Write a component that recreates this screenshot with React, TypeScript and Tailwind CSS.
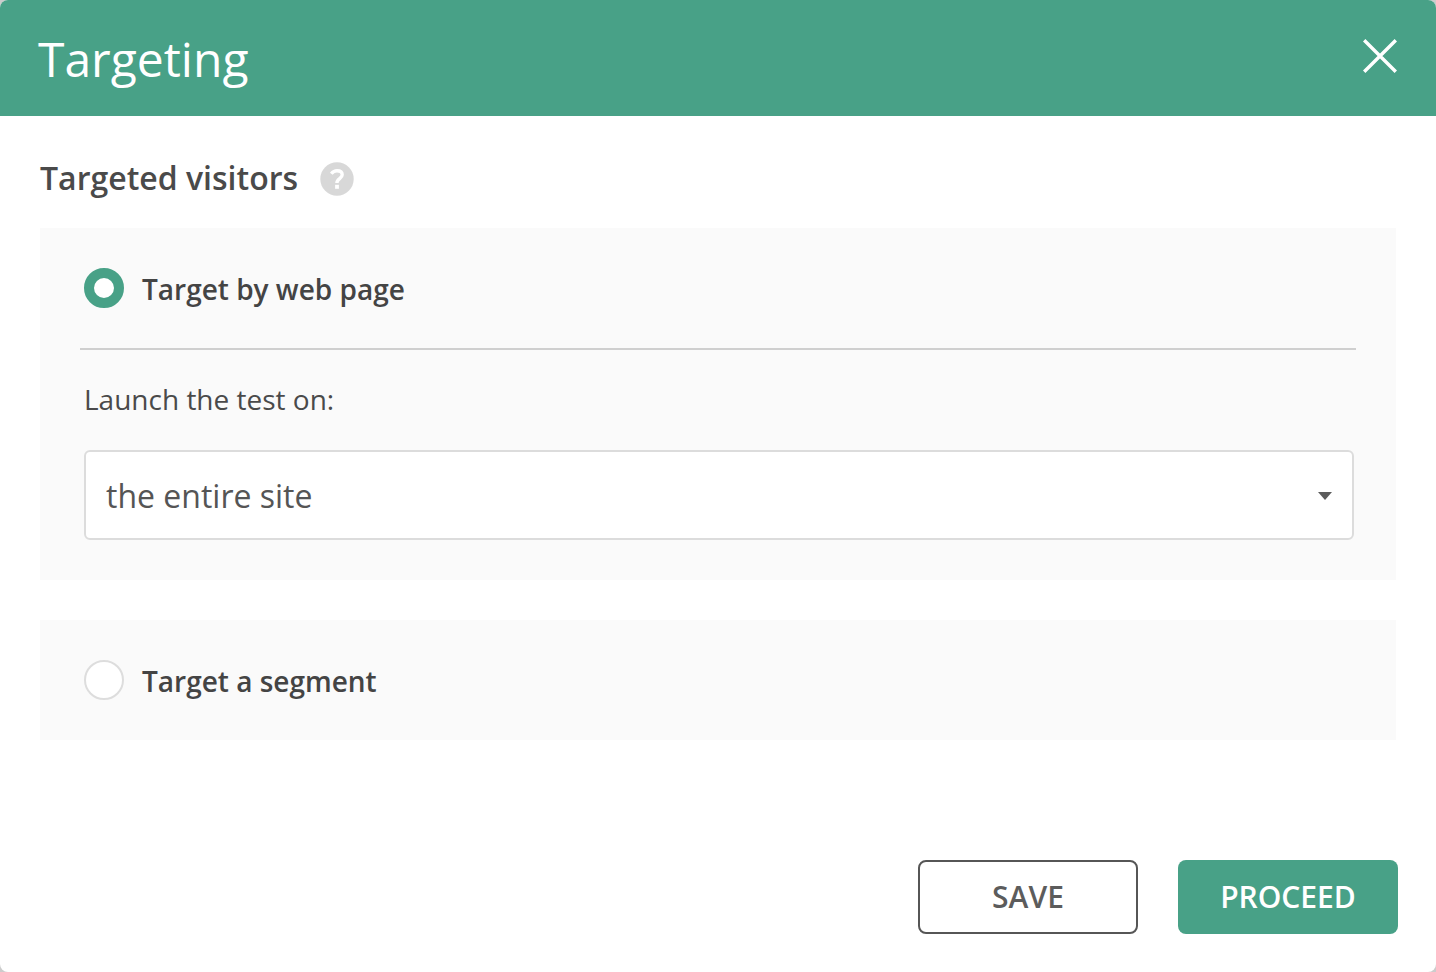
import React, { useState } from "react";

interface TargetOptionProps {
  id: string;
  label: string;
  checked: boolean;
  onSelect: (id: string) => void;
}

const TargetOption = ({ id, label, checked, onSelect }: TargetOptionProps) => {
  return (
    <div className="flex h-[120px] items-center gap-[18px] px-1">
      <input
        type="radio"
        id={id}
        name="target"
        checked={checked}
        onChange={() => onSelect(id)}
        className="size-10 shrink-0 cursor-pointer appearance-none rounded-full border-2 border-[#dddddd] bg-white checked:border-10 checked:border-[#48a187]"
      />
      <label
        htmlFor={id}
        className="cursor-pointer pt-[2px] text-[28px] leading-[38px] font-semibold text-[#444444]"
      >
        {label}
      </label>
    </div>
  );
};

const CloseIcon = () => (
  <svg
    viewBox="0 0 36 36"
    className="size-9"
    fill="none"
    stroke="currentColor"
    strokeWidth="3.4"
    aria-hidden="true"
  >
    <path d="M2.2 2.2 33.8 33.8M33.8 2.2 2.2 33.8" />
  </svg>
);

const HelpIcon = () => (
  <svg viewBox="0 0 34 34" className="size-[34px]" fill="none" aria-hidden="true">
    <circle cx="17" cy="17" r="16.7" fill="#d8d8d8" />
    <path
      d="M11.3 11.8c1.6-2 3.4-3 5.7-3 3.2 0 5.2 1.6 5.2 4 0 3.9-5.3 3.7-5.3 8.2"
      stroke="#ffffff"
      strokeWidth="3.4"
    />
    <path d="M15.1 22.8h3.8v4h-3.8z" fill="#ffffff" />
  </svg>
);

const App = () => {
  const [target, setTarget] = useState("page");

  return (
    <div className="min-h-screen bg-[#cccccc] font-['Open_Sans',sans-serif]">
      <div className="flex min-h-screen flex-col overflow-hidden rounded-[8px] bg-white">
        <header className="flex h-[116px] items-center justify-between bg-[#48a187] px-[38px] text-white">
          <h1 className="pt-[2px] text-5xl leading-[64px]">Targeting</h1>
          <button type="button" aria-label="Close" className="cursor-pointer pb-1">
            <CloseIcon />
          </button>
        </header>

        <main className="flex flex-1 flex-col px-10 pt-10">
          <div className="flex h-[72px] items-start gap-[22px]">
            <h2 className="text-[32px] leading-[44px] font-semibold text-[#4a4a4a]">
              Targeted visitors
            </h2>
            <button type="button" aria-label="Help" className="cursor-pointer pt-[6px]">
              <HelpIcon />
            </button>
          </div>

          <section className="bg-[#fafafa] px-10 pb-10">
            <TargetOption
              id="page"
              label="Target by web page"
              checked={target === "page"}
              onSelect={setTarget}
            />
            <div className="border-t-2 border-[#cfcfcf] pt-[30px]">
              <div className="flex flex-col gap-8 pr-[2px] pl-1">
                <label htmlFor="scope" className="text-[28px] leading-[38px] text-[#4a4a4a]">
                  Launch the test on:
                </label>
                <div className="relative">
                  <select
                    id="scope"
                    className="h-[90px] w-full cursor-pointer appearance-none rounded-md border-2 border-[#dcdcdc] bg-white px-5 pt-[2px] text-[32px] text-[#555555]"
                  >
                    <option>the entire site</option>
                  </select>
                  <svg
                    viewBox="0 0 14 8"
                    className="pointer-events-none absolute top-[42px] right-[22px] h-2 w-[14px]"
                    fill="#5c5c5c"
                    aria-hidden="true"
                  >
                    <path d="M0 0h14L7 8z" />
                  </svg>
                </div>
              </div>
            </div>
          </section>

          <section className="mt-10 bg-[#fafafa] px-10">
            <TargetOption
              id="segment"
              label="Target a segment"
              checked={target === "segment"}
              onSelect={setTarget}
            />
          </section>
        </main>

        <footer className="flex justify-end gap-10 px-[38px] pb-[38px]">
          <button
            type="button"
            className="h-[74px] w-[220px] cursor-pointer rounded-lg border-2 border-[#565656] bg-white pb-[2px] text-[30px] font-semibold text-[#5c5c5c]"
          >
            SAVE
          </button>
          <button
            type="button"
            className="h-[74px] w-[220px] cursor-pointer rounded-lg bg-[#48a187] pb-[2px] text-[30px] font-semibold text-white"
          >
            PROCEED
          </button>
        </footer>
      </div>
    </div>
  );
};

export default App;
